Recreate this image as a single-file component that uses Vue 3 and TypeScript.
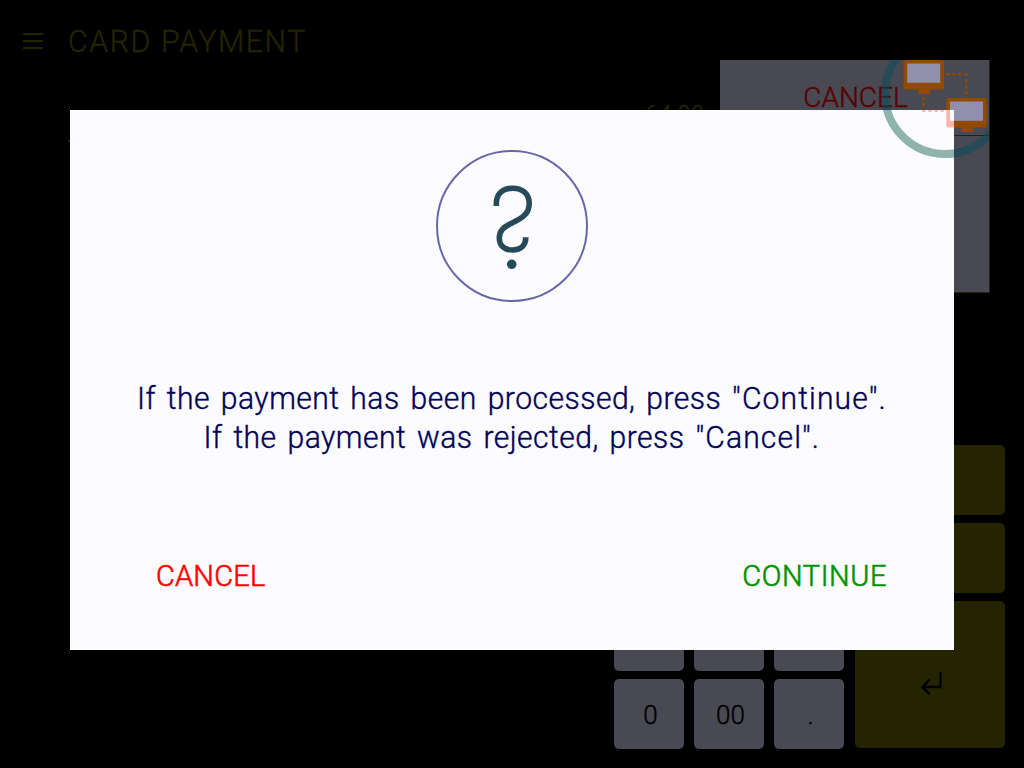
<script setup lang="ts">
interface Key {
  id: number
  label: string
}

const labels: string[] = ['', '', '', '', '', '', '', '', '', '0', '00', '.']
const keys: Key[] = labels.map((label, id) => ({ id, label }))
const layers = ['on-panel', 'on-dialog']
</script>

<template>
  <main class="screen">
    <header class="topbar">
      <svg class="menu" width="20" height="16" viewBox="0 0 20 16">
        <path d="M0 1H20M0 8H20M0 15H20" />
      </svg>
      <h1>CARD PAYMENT</h1>
    </header>

    <section class="summary">
      <span class="amount">64.00</span>
      <div class="panel">
        <button class="panel-cancel">CANCEL</button>
      </div>
    </section>
    <i class="mark"></i>

    <section class="pad">
      <div class="keys">
        <button v-for="k in keys" :key="k.id" class="key">{{ k.label }}</button>
      </div>
      <div class="actions">
        <button class="action"></button>
        <button class="action"></button>
        <button class="action enter">
          <svg width="22" height="24" viewBox="920 671 22 24">
            <path d="M939.500 672V687H921.500M928.800 679.500L921.500 687L928.800 694.200" />
          </svg>
        </button>
      </div>
    </section>

    <section class="dialog">
      <svg class="question" width="152" height="152" viewBox="436 150 152 152">
        <circle class="ring" cx="512" cy="226" r="75" />
        <path d="M496.3 206V204C496.3 194 502.5 188.2 512.7 188.2C522.8 188.2 529.2 194 529.2 203.5C529.2 213 523.5 217.5 513 222.5C503.5 227 499.3 230.5 499.3 238C499.3 245.5 504.5 250 512.5 250C520.8 250 525.8 245.5 525.8 237.3" />
        <circle class="dot" cx="511.7" cy="264.3" r="4.8" />
      </svg>
      <p>
        If the payment has been processed, press <span class="quoted">"Continue".</span><br />
        If the payment was rejected, press <span class="quoted">"Cancel".</span>
      </p>
      <footer>
        <button class="cancel">CANCEL</button>
        <button class="continue">CONTINUE</button>
      </footer>
    </section>

    <svg class="network" width="109" height="99" viewBox="880 60 109 99">
      <defs>
        <clipPath id="on-panel"><path d="M880 60H989V159H954V110H880Z" /></clipPath>
        <clipPath id="on-dialog"><path d="M880 110H954V159H880Z" /></clipPath>
      </defs>
      <g v-for="layer in layers" :key="layer" :class="layer" :clip-path="`url(#${layer})`">
        <circle class="halo" cx="945" cy="94" r="60" />
        <path class="link" d="M946 74.3H968M966.2 79V98" />
        <path class="link" d="M923.6 96.7V108M922.3 110.7H946" />
        <g v-for="(m, i) in [[903.5, 60], [946.3, 98]]" :key="i" :transform="`translate(${m[0]} ${m[1]})`">
          <path class="frame" d="M2 0H38.5Q40.5 0 40.5 2V27.5Q40.5 29.5 38.5 29.5H26L27 34H14L15.500 29.500H2Q0 29.500 0 27.500V2Q0 0 2 0Z" />
          <rect class="glass" x="3.700" y="3.500" width="33" height="19.300" />
        </g>
      </g>
    </svg>
  </main>
</template>

<style>
body {
  background: #000;
}
</style>

<style scoped>
.screen {
  position: relative;
  width: 1024px;
  height: 768px;
  overflow: hidden;
  background: #000;
  font-family: Roboto, 'Liberation Sans', sans-serif;
  font-weight: 300;
  color: #242400;
  -webkit-text-stroke: 0.4px currentColor;
}
button {
  border: 0;
  padding: 0;
  background: none;
  font: inherit;
}
.topbar {
  display: flex;
  align-items: flex-start;
  gap: 25px;
  height: 60px;
  padding: 21px 0 0 23px;
  box-sizing: border-box;
}
.menu {
  margin-top: 12px;
}
.menu path {
  stroke: #242400;
  stroke-width: 2;
}
h1 {
  margin: 0;
  font-weight: 300;
  font-size: 32px;
  line-height: 40px;
  letter-spacing: 1.7px;
  white-space: nowrap;
  transform: scaleX(0.945);
  transform-origin: left;
}
.summary {
  display: flex;
  justify-content: flex-end;
  width: 990px;
  height: 233px;
}
.amount {
  margin: 37px 16px 0 0;
  font-size: 26px;
  line-height: 36px;
  transform: scaleX(0.92);
  transform-origin: right;
}
.panel {
  width: 270px;
  height: 233px;
  box-sizing: border-box;
  border: solid #242400;
  border-width: 0 1px 1px 0;
  background: #494953;
}
.panel-cancel {
  display: block;
  width: 100%;
  height: 76px;
  padding-left: 2px;
  border-bottom: 1px solid #242400;
  color: #570000;
  font-size: 28px;
}
.mark {
  position: absolute;
  left: 68px;
  top: 140px;
  width: 2px;
  height: 2px;
  background: #242400;
}
.pad {
  display: flex;
  align-items: flex-end;
  gap: 11px;
  margin: 152px 0 0 614px;
}
.keys {
  display: grid;
  grid-template-columns: repeat(3, 70px);
  grid-auto-rows: 70px;
  gap: 8px 10px;
}
.key {
  border-radius: 5px;
  background: #494953;
  color: #000;
  font-size: 26px;
  padding-top: 2px;
  padding-left: 3px;
}
.actions {
  display: grid;
  grid-template-rows: 70px 70px 147px;
  gap: 8px;
  width: 150px;
  padding-bottom: 1px;
}
.action {
  border-radius: 5px;
  background: #242400;
}
.enter {
  display: flex;
  justify-content: center;
  align-items: flex-start;
  padding: 70px 0 0 3px;
}
.enter path {
  fill: none;
  stroke: #000;
  stroke-width: 2.300;
}
.dialog {
  position: absolute;
  left: 70px;
  top: 110px;
  width: 884px;
  height: 540px;
  box-sizing: border-box;
  padding-top: 40px;
  display: flex;
  flex-direction: column;
  align-items: center;
  background: #fcfcff;
}
.question path {
  fill: none;
  stroke: #264a59;
  stroke-width: 5.600;
}
.ring {
  fill: none;
  stroke: #6868a8;
  stroke-width: 2;
}
.dot {
  fill: #264a59;
}
p {
  margin: 77px 0 0;
  color: #000055;
  font-size: 32px;
  line-height: 39px;
  letter-spacing: 0.5px;
  word-spacing: 3.3px;
  text-align: center;
  white-space: nowrap;
  transform: scaleX(0.94);
}
.quoted {
  letter-spacing: 1.2px;
}
footer {
  display: flex;
  justify-content: space-between;
  width: 731px;
  margin: 99px 0 0 19px;
  font-size: 29px;
  line-height: 40px;
  -webkit-text-stroke-width: 0.6px;
}
.cancel {
  color: #ff0000;
  letter-spacing: 0.2px;
}
.continue {
  color: #009200;
  letter-spacing: 0.6px;
}
.network {
  position: absolute;
  left: 880px;
  top: 60px;
}
.halo {
  fill: none;
  stroke-width: 8;
}
.link {
  fill: none;
  stroke-width: 2.600;
  stroke-dasharray: 3.200 2.900;
}
.on-panel .halo {
  stroke: rgba(3, 77, 93, 0.5);
}
.on-panel .link {
  stroke: #924900;
}
.on-panel .frame {
  fill: #924900;
}
.on-panel .glass {
  fill: #9190ac;
}
.on-dialog .halo {
  stroke: #90b4ac;
}
.on-dialog .link {
  stroke: #ffb4ac;
}
.on-dialog .frame {
  fill: #ffb4ac;
}
.on-dialog .glass {
  fill: #fcfcff;
}
</style>
